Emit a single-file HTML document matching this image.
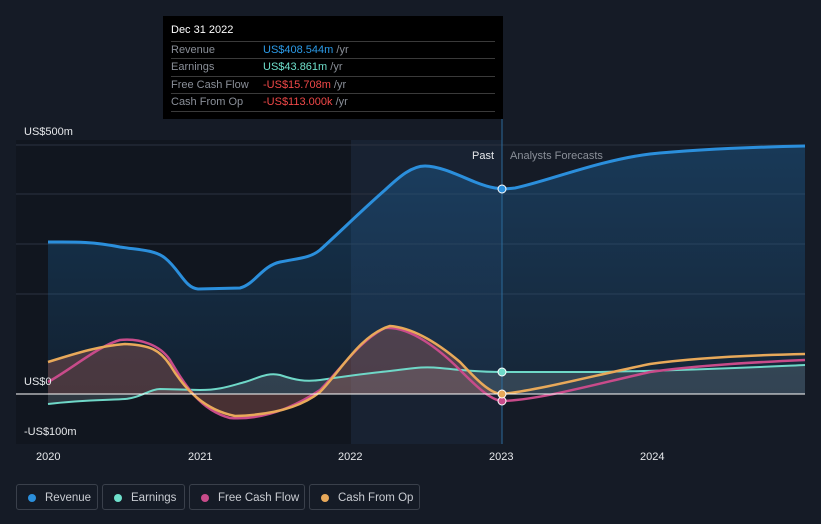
<!DOCTYPE html>
<html><head><meta charset="utf-8"><style>
body{margin:0;width:821px;height:524px;background:#151b26;font-family:"Liberation Sans",sans-serif;overflow:hidden;position:relative}
.tt{position:absolute;left:163px;top:16px;width:340px;height:103px;background:#000;font-size:11px}
.tt .h{position:absolute;left:8px;top:8px;color:#fff}
.row{position:absolute;left:8px;width:324px;height:17px;border-top:1px solid #3a3a3a;color:#8a8f98;line-height:17px}
.row span{position:absolute;left:92px}
.leg{position:absolute;top:484px;height:26px;border:1px solid #3a404b;border-radius:3px;color:#c9ccd2;font-size:11.5px;line-height:26px;box-sizing:border-box}
.leg i{position:absolute;left:11px;top:9px;width:8px;height:8px;border-radius:50%}
.lbl{position:absolute;font-size:11px;color:#e6e8eb}
</style></head><body>
<svg width="821" height="524" style="position:absolute;left:0;top:0">
<defs>
<linearGradient id="rv" x1="0" y1="0" x2="0" y2="1"><stop offset="0" stop-color="#1e6fb0" stop-opacity=".45"/><stop offset="1" stop-color="#1e6fb0" stop-opacity=".15"/></linearGradient>
</defs>
<rect x="16" y="140" width="335" height="304" fill="#11161f"/>
<rect x="351" y="140" width="151" height="304" fill="#182232"/>
<g stroke="#2c3340" stroke-width="1">
<line x1="16" y1="145" x2="805" y2="145"/><line x1="16" y1="194" x2="805" y2="194"/><line x1="16" y1="244" x2="805" y2="244"/><line x1="16" y1="294" x2="805" y2="294"/>
</g>
<path d="M48,242 C70,242 90,241 120,247 C140,250 155,250 165,258 C180,270 185,288 198,289 L240,288 C255,284 262,266 280,262 C300,258 310,258 320,250 C340,232 360,212 385,190 C400,176 412,166 425,166 C440,166 460,176 475,182 C490,188 500,190 515,188 C545,182 600,160 650,154 C700,149 760,147 805,146 L805,394 L48,394 Z" fill="url(#rv)" opacity=".8"/>
<path d="M48,404 C80,400 110,400 125,399 C140,398 150,389 160,389 L200,390 C220,390 230,386 245,382 C258,378 268,372 280,375 C295,380 305,382 320,380 C340,377 360,374 390,371 C410,369 420,366 440,368 C460,370 480,372 502,372 L600,372 C700,370 760,367 805,365 L805,394 L48,394 Z" fill="#8aa0a8" opacity=".25"/>
<path d="M48,382 C70,370 100,345 120,340 C140,338 160,345 170,360 C185,385 200,410 230,418 C260,420 290,410 320,390 C340,370 360,340 385,328 C410,326 440,350 460,370 C475,385 490,400 502,401 C540,400 600,383 650,372 C700,365 760,362 805,360" fill="none"/>
<path d="M48,362 C80,352 100,346 125,344 C150,345 160,350 170,365 C185,390 205,410 235,416 C270,415 300,408 320,392 C340,372 360,335 390,326 C415,328 440,345 460,362 C475,378 490,394 502,394 L48,394 Z" fill="#b0605a" opacity=".35"/>
<path d="M502,394 C540,390 600,374 650,364 C700,357 760,355 805,354 L805,394 Z" fill="#3a3a3a" opacity=".0"/>
<path d="M48,242 C70,242 90,241 120,247 C140,250 155,250 165,258 C180,270 185,288 198,289 L240,288 C255,284 262,266 280,262 C300,258 310,258 320,250 C340,232 360,212 385,190 C400,176 412,166 425,166 C440,166 460,176 475,182 C490,188 500,190 515,188 C545,182 600,160 650,154 C700,149 760,147 805,146" fill="none" stroke="#2b8fdc" stroke-width="3"/>
<path d="M48,404 C80,400 110,400 125,399 C140,398 150,389 160,389 L200,390 C220,390 230,386 245,382 C258,378 268,372 280,375 C295,380 305,382 320,380 C340,377 360,374 390,371 C410,369 420,366 440,368 C460,370 480,372 502,372 L600,372 C700,370 760,367 805,365" fill="none" stroke="#6fd8c8" stroke-width="2"/>
<path d="M48,382 C70,370 100,345 120,340 C140,338 160,345 170,360 C185,385 200,410 230,418 C260,420 290,410 320,390 C340,370 360,340 385,328 C410,326 440,350 460,370 C475,385 490,400 502,401 C540,400 600,383 650,372 C700,365 760,362 805,360" fill="none" stroke="#c84b8a" stroke-width="2.5"/>
<path d="M48,362 C80,352 100,346 125,344 C150,345 160,350 170,365 C185,390 205,410 235,416 C270,415 300,408 320,392 C340,372 360,335 390,326 C415,328 440,345 460,362 C475,378 490,394 502,394 C540,390 600,374 650,364 C700,357 760,355 805,354" fill="none" stroke="#e8a95a" stroke-width="2.5"/>
<line x1="16" y1="394" x2="805" y2="394" stroke="#fff" stroke-width="1"/>
<line x1="502" y1="119" x2="502" y2="444" stroke="#2b6a9a" stroke-width="1"/>
<circle cx="502" cy="189" r="4" fill="#2b8fdc" stroke="#fff" stroke-width="1"/>
<circle cx="502" cy="372" r="4" fill="#6fd8c8" stroke="#fff" stroke-width="1"/>
<circle cx="502" cy="401" r="4" fill="#c84b8a" stroke="#fff" stroke-width="1"/>
<circle cx="502" cy="394" r="4" fill="#e8a95a" stroke="#fff" stroke-width="1"/>
</svg>
<div class="lbl" style="left:24px;top:126px">US$500m</div>
<div class="lbl" style="left:24px;top:376px">US$0</div>
<div class="lbl" style="left:24px;top:426px">-US$100m</div>
<div class="lbl" style="left:472px;top:150px">Past</div>
<div class="lbl" style="left:510px;top:150px;color:#8a8f98">Analysts Forecasts</div>
<div class="lbl" style="left:36px;top:451px">2020</div>
<div class="lbl" style="left:188px;top:451px">2021</div>
<div class="lbl" style="left:338px;top:451px">2022</div>
<div class="lbl" style="left:489px;top:451px">2023</div>
<div class="lbl" style="left:640px;top:451px">2024</div>
<div class="tt"><div class="h">Dec 31 2022</div>
<div class="row" style="top:25px">Revenue<span><b style="font-weight:normal;color:#2b9be8">US$408.544m</b> /yr</span></div>
<div class="row" style="top:42px">Earnings<span><b style="font-weight:normal;color:#6fe0cc">US$43.861m</b> /yr</span></div>
<div class="row" style="top:60px">Free Cash Flow<span><b style="font-weight:normal;color:#f04848">-US$15.708m</b> /yr</span></div>
<div class="row" style="top:77px">Cash From Op<span><b style="font-weight:normal;color:#f04848">-US$113.000k</b> /yr</span></div>
<div class="row" style="top:95px;height:0"></div>
</div>
<div class="leg" style="left:16px;width:82px"><i style="background:#2b8fdc"></i><span style="position:absolute;left:28px">Revenue</span></div>
<div class="leg" style="left:102px;width:83px"><i style="background:#6fe0cc"></i><span style="position:absolute;left:28px">Earnings</span></div>
<div class="leg" style="left:189px;width:116px"><i style="background:#c84b8a"></i><span style="position:absolute;left:28px">Free Cash Flow</span></div>
<div class="leg" style="left:309px;width:111px"><i style="background:#e8a95a"></i><span style="position:absolute;left:28px">Cash From Op</span></div>
</body></html>
